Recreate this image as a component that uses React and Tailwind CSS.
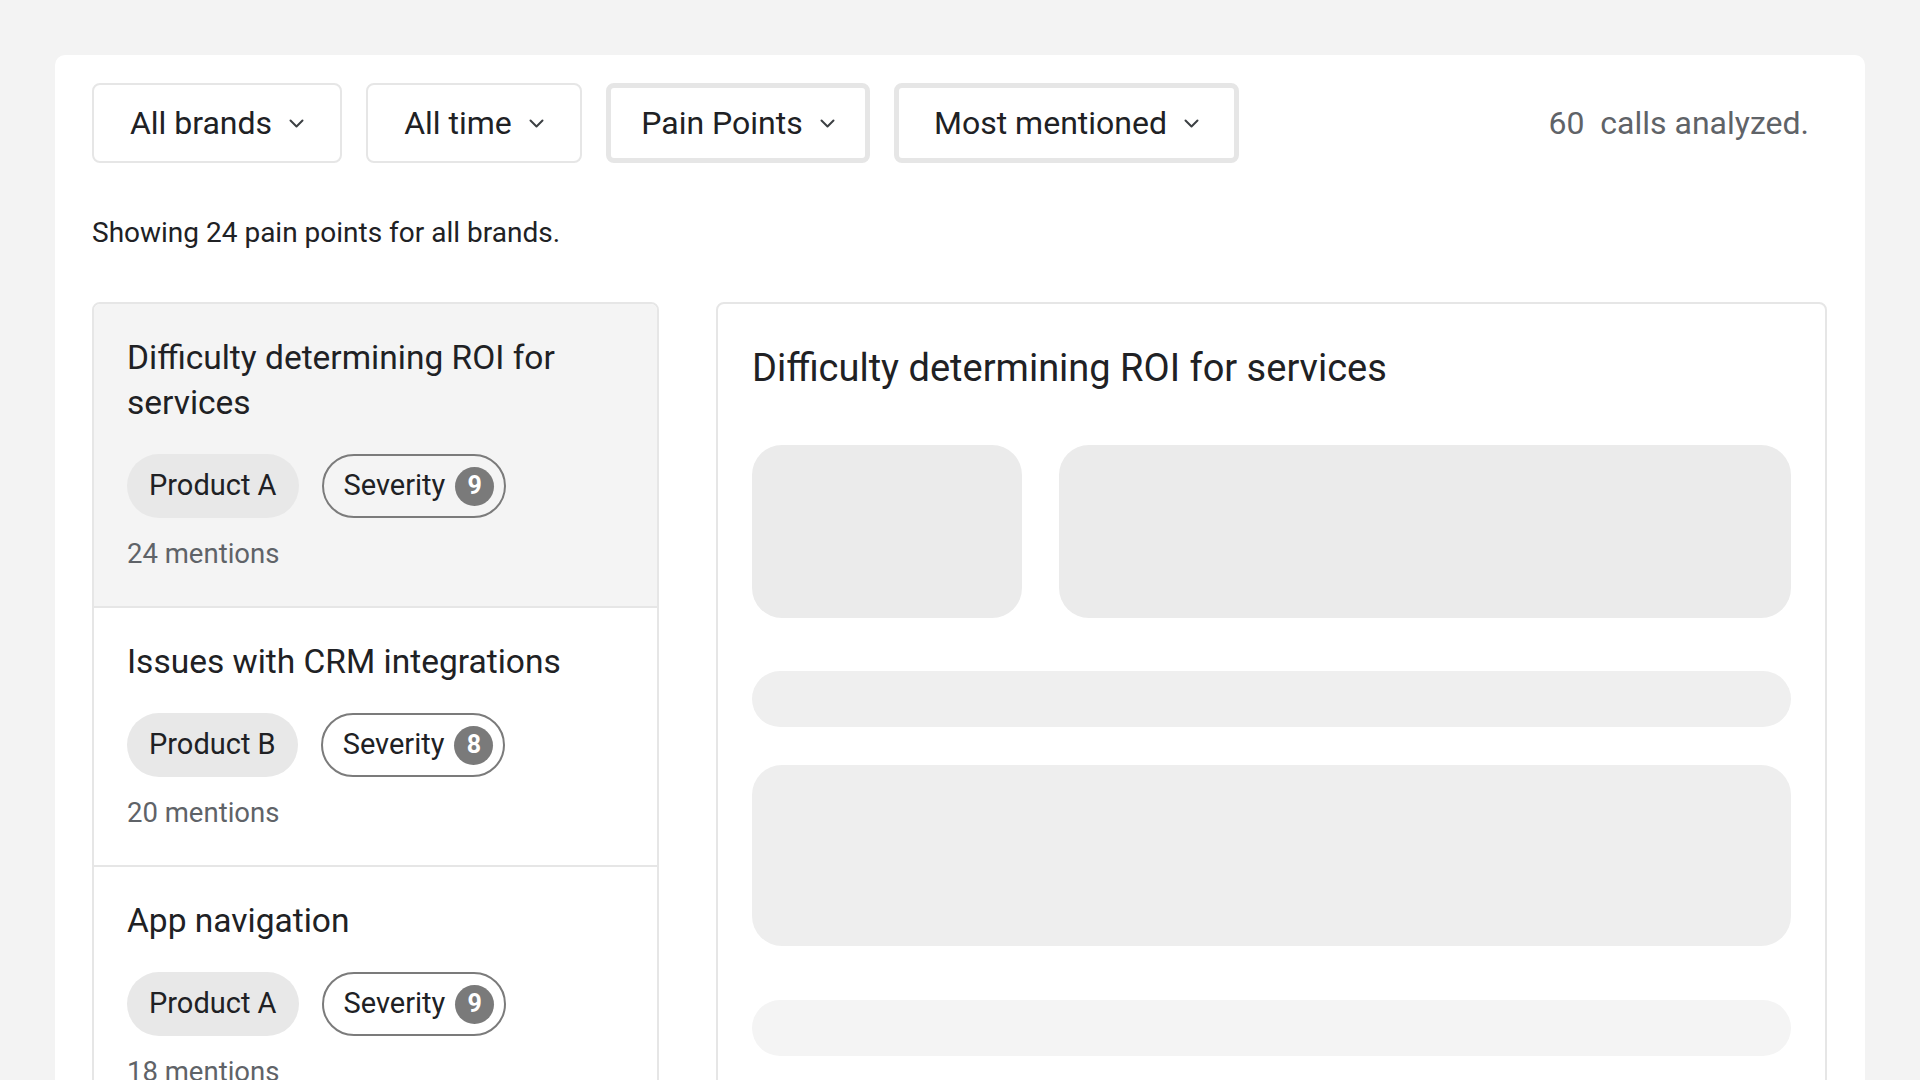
import React from "react";

const painPoints = [
  { title: "Difficulty determining ROI for services", product: "Product A", severity: 9, mentions: 24 },
  { title: "Issues with CRM integrations", product: "Product B", severity: 8, mentions: 20 },
  { title: "App navigation", product: "Product A", severity: 9, mentions: 18 },
];

function Chevron() {
  return (
    <svg width="15" height="9" viewBox="0 0 15 9" fill="none">
      <path d="M1.5 1.5l6 6 6-6" stroke="#3c4043" strokeWidth="2" strokeLinecap="round" strokeLinejoin="round" />
    </svg>
  );
}

function FilterButton({ label, width, active }) {
  return (
    <button
      className={
        "h-[80px] flex items-center justify-center gap-[17px] rounded-[8px] bg-white text-[32px] text-[#202124] " +
        width +
        (active ? " border-[5px] border-[#e6e6e6]" : " border-2 border-[#e6e6e6]")
      }
    >
      <span>{label}</span>
      <Chevron />
    </button>
  );
}

export default function App() {
  const selected = 0;

  return (
    <div className="h-screen overflow-hidden bg-[#f3f3f3] pt-[55px] px-[55px]" style={{ fontFamily: "Roboto, 'Noto Sans', sans-serif" }}>
      <div className="h-full bg-white rounded-t-[10px] pt-[28px] pl-[37px] pr-[38px]">
        {/* Filters */}
        <div className="flex items-center gap-6">
          <FilterButton label="All brands" width="w-[250px]" />
          <FilterButton label="All time" width="w-[216px]" />
          <FilterButton label="Pain Points" width="w-[264px]" active />
          <FilterButton label="Most mentioned" width="w-[345px]" active />
          <span className="ml-auto mr-[18px] text-[32px] text-[#5f6368]">60&nbsp; calls analyzed.</span>
        </div>

        <p className="mt-[52px] text-[28px] leading-[36px] text-[#202124]">
          Showing 24 pain points for all brands.
        </p>

        <div className="mt-[51px] flex gap-[57px] items-start">
          {/* List */}
          <div className="w-[567px] shrink-0 border-2 border-[#e6e6e6] rounded-[8px] overflow-hidden">
            {painPoints.map((p, i) => (
              <div
                key={p.title}
                className={
                  "px-[33px] pt-[31px] pb-[34px] border-b-2 border-[#e6e6e6] " +
                  (i === selected ? "bg-[#f4f4f4]" : "bg-white")
                }
              >
                <h3 className="text-[33.5px] leading-[45px] text-[#202124] pr-[30px]">{p.title}</h3>
                <div className="mt-[29px] flex items-center gap-[23px]">
                  <span className="h-[64px] px-[22px] flex items-center rounded-full bg-[#e8e8e8] text-[29px] text-[#202124]">
                    {p.product}
                  </span>
                  <span className="h-[64px] pl-[20px] pr-[10px] flex items-center gap-[10px] rounded-full border-2 border-[#7b7b7b] text-[29px] text-[#202124]">
                    Severity
                    <span className="w-[39px] h-[39px] rounded-full bg-[#7a7a7a] text-white text-[25px] font-bold flex items-center justify-center">
                      {p.severity}
                    </span>
                  </span>
                </div>
                <p className="mt-[18px] text-[27.5px] leading-[36px] text-[#5f6368]">{p.mentions} mentions</p>
              </div>
            ))}
          </div>

          {/* Detail */}
          <div className="flex-1 h-[900px] border-2 border-[#e6e6e6] rounded-[8px] pt-[40px] px-[34px]">
            <h2 className="text-[38px] leading-[48px] text-[#202124]">Difficulty determining ROI for services</h2>
            <div className="mt-[53px] flex gap-[37px]">
              <div className="w-[270px] h-[173px] rounded-[30px] bg-[#ebebeb]" />
              <div className="flex-1 h-[173px] rounded-[30px] bg-[#ebebeb]" />
            </div>
            <div className="mt-[53px] h-[56px] rounded-full bg-[#efefef]" />
            <div className="mt-[38px] h-[181px] rounded-[30px] bg-[#eeeeee]" />
            <div className="mt-[54px] h-[56px] rounded-full bg-[#f4f4f4]" />
          </div>
        </div>
      </div>
    </div>
  );
}
